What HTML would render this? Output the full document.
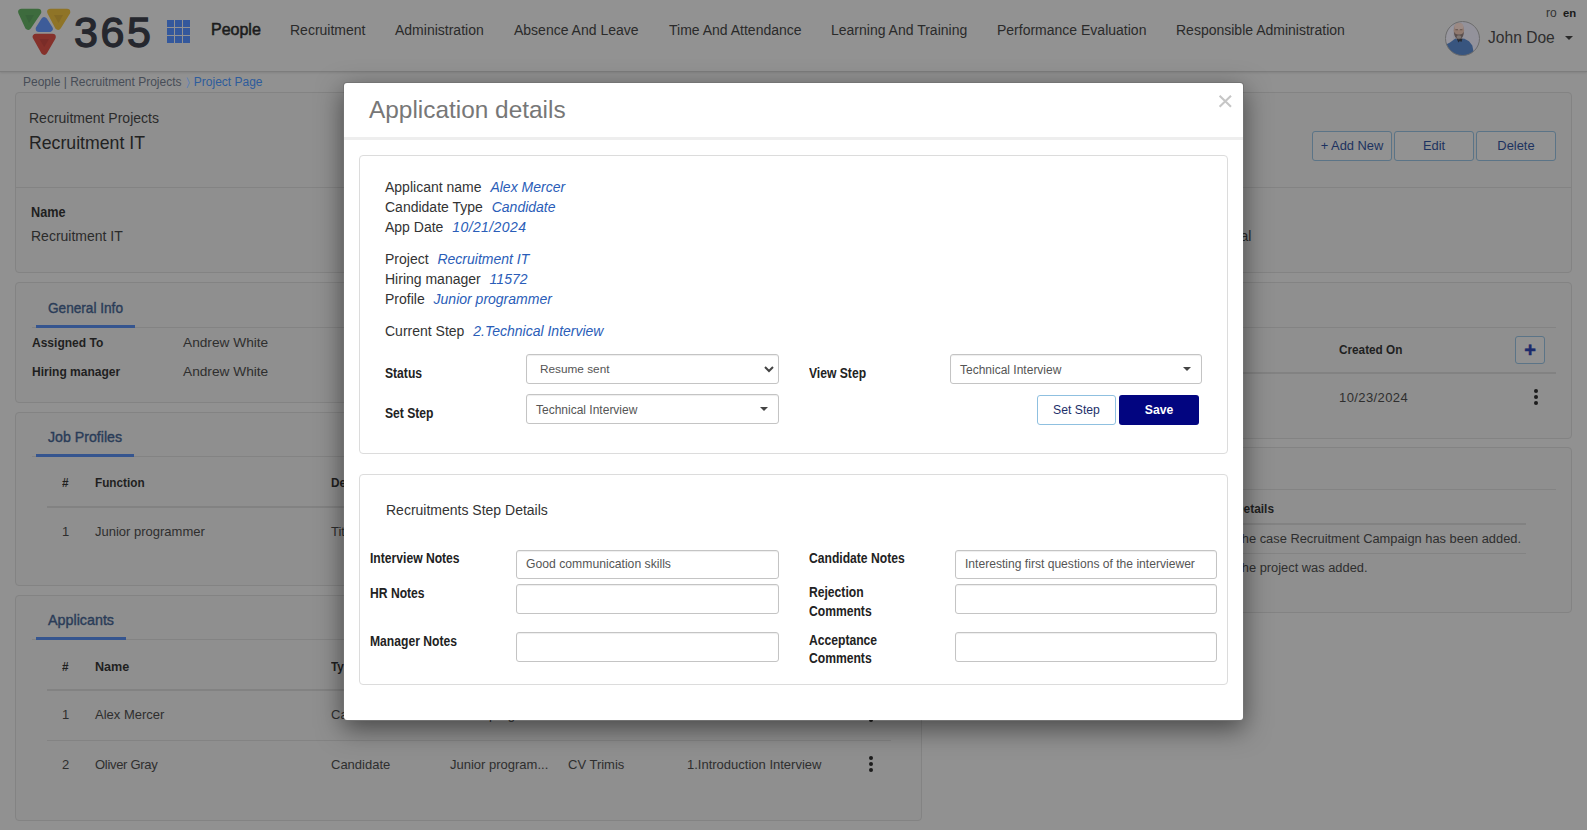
<!DOCTYPE html>
<html lang="en">
<head>
<meta charset="utf-8">
<title>Project Page</title>
<style>
*{box-sizing:border-box;margin:0;padding:0}
html,body{width:1587px;height:831px;overflow:hidden;background:#fff}
body{font-family:"Liberation Sans",sans-serif;font-size:14px;color:#222;position:relative}
#page{position:absolute;left:0;top:0;width:1587px;height:830px;background:#919191;overflow:hidden}
.t{position:absolute;white-space:nowrap;line-height:20px;height:20px;color:#262626}
.b{font-weight:bold}
.card{position:absolute;background:#8f8f8f;border:1px solid #838383;border-radius:4px}
.hl{position:absolute;height:1px;background:#838383}
#hdr{position:absolute;left:0;top:0;width:1587px;height:72px;background:#929292;border-bottom:1px solid #7d7d7d;box-shadow:0 1px 2px rgba(0,0,0,.1)}
.nav{font-size:14px;color:#2a2a2a;top:20px}
.btn{position:absolute;height:30px;border:1px solid #5b7487;border-radius:3px;background:#929292;color:#1d3260;font-size:12.9px;text-align:center;line-height:28px;white-space:nowrap}
.tab{color:#2a3c58;font-size:15px;-webkit-text-stroke:.4px #2a3c58;transform-origin:0 50%}
.tabu{position:absolute;height:3px;background:#35558f}
.kebab{position:absolute;width:4px}
.kebab i{display:block;width:4px;height:4px;border-radius:50%;background:#1c1c1c;margin-bottom:2px}
/* modal */
#mshadow{position:absolute;left:343px;top:82px;width:901px;height:639px;background:rgba(0,0,0,.2);border-radius:4px;box-shadow:0 8px 26px rgba(0,0,0,.5)}
#modal{position:absolute;left:344px;top:83px;width:899px;height:637px;background:#fff;border-radius:3px}
#mi{position:absolute;left:0;top:0;width:899px;height:637px}
.panel{position:absolute;border:1px solid #dcdcdc;border-radius:4px;background:#fff}
.v{color:#2a5db8;font-style:italic}
.inp{position:absolute;border:1px solid #c4c4c4;border-radius:3px;background:#fff;box-shadow:inset 0 1px 1px rgba(0,0,0,.07)}
.inp span{position:absolute;white-space:nowrap;color:#555;font-size:12px;line-height:16px}
.caret{position:absolute;width:0;height:0;border-left:4px solid transparent;border-right:4px solid transparent;border-top:4px solid #444}
.ml{font-size:14px;color:#333}
.lb{font-size:14px;color:#222;transform:scaleX(.866);transform-origin:0 50%}
.v{margin-left:5px}
.mbtn{position:absolute;height:30px;border-radius:3px;font-size:13px;text-align:center;line-height:28px;white-space:nowrap}
.bm{font-size:13px;font-weight:bold;color:#1f1f1f;transform:scaleX(.905);transform-origin:0 50%}
</style>
</head>
<body>
<div id="page">
  <div id="hdr">
    <svg style="position:absolute;left:14px;top:4px" width="60" height="56" viewBox="14 4 60 56">
      <g stroke-linejoin="round" stroke-width="6.6">
        <path d="M21.5 12 L38 12 L28.2 26.5 Z" fill="#3d6b3d" stroke="#3d6b3d"/>
        <path d="M50.5 12 L67 12 L58 26.5 Z" fill="#8f7427" stroke="#8f7427"/>
        <path d="M44.2 20.5 L49.5 28.7 L39 28.7 Z" fill="#3d5c99" stroke="#3d5c99"/>
        <path d="M36 37 L52.5 37 L44.1 51.5 Z" fill="#85312b" stroke="#85312b"/>
      </g>
      <path d="M25.5 15 L34 15 L29 23 Z" fill="#38633a"/>
      <path d="M54 15 L63 15 L58.5 23 Z" fill="#846a25"/>
      <path d="M39.5 39 L49 39 L44.2 47 Z" fill="#7a2c28"/>
    </svg>
    <div class="t" id="l365" style="left:74px;top:9px;font-size:43px;line-height:46px;height:46px;letter-spacing:2.6px;color:#25272e;-webkit-text-stroke:1.3px #25272e">365</div>
    <svg style="position:absolute;left:167px;top:20px" width="23" height="23" viewBox="0 0 23 23" fill="#34589c">
      <rect x="0" y="0" width="7" height="7"/><rect x="8" y="0" width="7" height="7"/><rect x="16" y="0" width="7" height="7"/>
      <rect x="0" y="8" width="7" height="7"/><rect x="8" y="8" width="7" height="7"/><rect x="16" y="8" width="7" height="7"/>
      <rect x="0" y="16" width="7" height="7"/><rect x="8" y="16" width="7" height="7"/><rect x="16" y="16" width="7" height="7"/>
    </svg>
    <div class="t" id="npeople" style="left:211px;top:20px;font-size:16px;color:#1c1c1c;-webkit-text-stroke:.55px #1c1c1c">People</div>
    <div class="t nav" style="left:290px">Recruitment</div>
    <div class="t nav" style="left:395px">Administration</div>
    <div class="t nav" style="left:514px">Absence And Leave</div>
    <div class="t nav" style="left:669px">Time And Attendance</div>
    <div class="t nav" style="left:831px">Learning And Training</div>
    <div class="t nav" style="left:997px">Performance Evaluation</div>
    <div class="t nav" style="left:1176px">Responsible Administration</div>
    <div class="t" style="left:1546px;top:3px;font-size:12px;color:#333">ro</div>
    <div class="t b" style="left:1563px;top:3px;font-size:11.3px;color:#1a1a1a">en</div>
    <svg style="position:absolute;left:1445px;top:20.5px" width="35" height="35" viewBox="0 0 35 35">
      <defs><clipPath id="avc"><circle cx="17.5" cy="17.5" r="17"/></clipPath></defs>
      <g clip-path="url(#avc)">
        <rect width="35" height="35" fill="#93929b"/>
        <rect x="0" y="0" width="8" height="35" fill="#98979f"/>
        <path d="M0 24 L5 21.5 L10.4 17.4 L14.5 19.6 L18.9 17.4 L24 20.3 L27.3 24.6 L28.6 31 L28 36 L0 36 Z" fill="#38557f"/>
        <path d="M11.6 17.6 L13.4 21.4 L14.8 20 L16.4 21 L17.7 17.6 Z" fill="#262b35"/>
        <ellipse cx="13.9" cy="9.4" rx="5.2" ry="7.6" fill="#917a70"/>
        <ellipse cx="13.9" cy="5.4" rx="4.4" ry="3.4" fill="#9c8a84"/>
        <path d="M8.9 10.5 Q9.2 17.9 13.9 18.6 Q18.6 17.9 18.9 10.5 Q17.5 14 13.9 13.4 Q10.3 14 8.9 10.5 Z" fill="#5a4e4d"/>
        <ellipse cx="13.9" cy="16" rx="2.4" ry="1.7" fill="#7f7672"/>
        <rect x="10.5" y="8.3" width="2.5" height=".9" fill="#5f4f49"/><rect x="14.8" y="8.3" width="2.5" height=".9" fill="#5f4f49"/>
      </g>
      <circle cx="17.5" cy="17.5" r="17" fill="none" stroke="#6c6c6c" stroke-width="1"/>
    </svg>
    <div class="t" id="jd" style="left:1488px;top:28px;font-size:15.6px;color:#2e2e2e">John Doe</div>
    <div class="caret" style="left:1565px;top:36px;border-top-color:#2a2a2a"></div>
  </div>

  <!-- breadcrumb -->
  <div class="t" id="bc" style="left:23px;top:72px;font-size:12px;color:#474d57">People | Recruitment Projects <span style="color:#5b7fb5;margin:0 .8px">&#x232A;</span> <span style="color:#2d5c9c">Project Page</span></div>

  <!-- top card -->
  <div class="card" style="left:15px;top:92px;width:1557px;height:181px"></div>
  <div class="hl" style="left:16px;top:187px;width:1555px"></div>
  <div class="t" id="rp1" style="left:29px;top:108px;font-size:14px;color:#2b2b2b">Recruitment Projects</div>
  <div class="t" id="rp2" style="left:29px;top:132px;font-size:17.7px;line-height:22px;height:22px;color:#222">Recruitment IT</div>
  <div class="btn" style="left:1312px;top:131px;width:80px">+ Add New</div>
  <div class="btn" style="left:1394px;top:131px;width:80px">Edit</div>
  <div class="btn" style="left:1476px;top:131px;width:80px">Delete</div>
  <div class="t bm" id="nm" style="left:31px;top:202px;font-size:14px">Name</div>
  <div class="t" id="rp3" style="left:31px;top:226px;font-size:14px;color:#2b2b2b">Recruitment IT</div>
  <div class="t" style="left:1240.5px;top:226px;font-size:14px;color:#2b2b2b">al</div>

  <!-- General Info -->
  <div class="card" style="left:15px;top:282px;width:907px;height:121px"></div>
  <div class="hl" style="left:32px;top:327px;width:875px"></div>
  <div class="t tab" id="tab1" style="left:48px;top:298px;transform:scaleX(.908)">General Info</div>
  <div class="tabu" style="left:36px;top:325px;width:99px"></div>
  <div class="t bm" id="at" style="left:32px;top:333px;transform:scaleX(.925)">Assigned To</div>
  <div class="t" id="aw1" style="left:183px;top:333px;font-size:13.7px;color:#2e2e2e">Andrew White</div>
  <div class="t bm" id="hm" style="left:32px;top:362px;transform:scaleX(.925)">Hiring manager</div>
  <div class="t" style="left:183px;top:362px;font-size:13.7px;color:#2e2e2e">Andrew White</div>

  <!-- Job Profiles -->
  <div class="card" style="left:15px;top:412px;width:907px;height:174px"></div>
  <div class="hl" style="left:32px;top:456px;width:875px"></div>
  <div class="t tab" id="tab2" style="left:48px;top:426.6px;transform:scaleX(.944)">Job Profiles</div>
  <div class="tabu" style="left:36px;top:454px;width:98px"></div>
  <div class="t bm" style="left:62px;top:473px;">#</div>
  <div class="t bm" id="fn" style="left:95px;top:473px;">Function</div>
  <div class="t bm" style="left:331px;top:473px;">De</div>
  <div class="hl" style="left:47px;top:506px;width:860px;height:2px;background:#828282"></div>
  <div class="t" style="left:62px;top:522px;font-size:13px;color:#2e2e2e">1</div>
  <div class="t" id="jp" style="left:95px;top:522px;font-size:13px;color:#2e2e2e">Junior programmer</div>
  <div class="t" style="left:331px;top:522px;font-size:13px;color:#2e2e2e">Tit</div>

  <!-- Applicants -->
  <div class="card" style="left:15px;top:595px;width:907px;height:226px"></div>
  <div class="hl" style="left:32px;top:639px;width:875px"></div>
  <div class="t tab" id="tab3" style="left:48px;top:609.6px;transform:scaleX(.954)">Applicants</div>
  <div class="tabu" style="left:36px;top:637px;width:90px"></div>
  <div class="t bm" style="left:62px;top:657px;">#</div>
  <div class="t bm" style="left:95px;top:657px;transform:scaleX(.97)">Name</div>
  <div class="t bm" style="left:331px;top:657px;">Ty</div>
  <div class="hl" style="left:47px;top:689px;width:844px;height:2px;background:#828282"></div>
  <div class="t" style="left:62px;top:705px;font-size:13px;color:#2e2e2e">1</div>
  <div class="t" id="am" style="left:95px;top:705px;font-size:13px;color:#2e2e2e">Alex Mercer</div>
  <div class="t" style="left:331px;top:705px;font-size:13px;color:#2e2e2e">Candidate</div>
  <div class="t" style="left:450px;top:705px;font-size:13px;color:#2e2e2e">Junior program...</div>
  <div class="kebab" style="left:869px;top:706px"><i></i><i></i><i></i></div>
  <div class="hl" style="left:47px;top:740px;width:844px"></div>
  <div class="t" style="left:62px;top:755px;font-size:13px;color:#2e2e2e">2</div>
  <div class="t" id="og" style="left:95px;top:755px;font-size:13px;letter-spacing:-.3px;color:#2e2e2e">Oliver Gray</div>
  <div class="t" id="cand" style="left:331px;top:755px;font-size:13px;color:#2e2e2e">Candidate</div>
  <div class="t" id="jpe" style="left:450px;top:755px;font-size:13px;color:#2e2e2e">Junior program...</div>
  <div class="t" id="cvt" style="left:568px;top:755px;font-size:13px;color:#2e2e2e">CV Trimis</div>
  <div class="t" id="ii" style="left:687px;top:755px;font-size:13px;color:#2e2e2e">1.Introduction Interview</div>
  <div class="kebab" style="left:869px;top:756px"><i></i><i></i><i></i></div>

  <!-- right col -->
  <div class="card" style="left:932px;top:282px;width:640px;height:157px"></div>
  <div class="hl" style="left:948px;top:327px;width:608px"></div>
  <div class="t bm" id="co" style="left:1339px;top:340px;">Created On</div>
  <div class="btn" style="left:1515px;top:336px;width:30px;height:28px;line-height:27px;font-weight:bold;font-size:20px;color:#1b2a6b;-webkit-text-stroke:.5px #1b2a6b">+</div>
  <div class="hl" style="left:948px;top:372px;width:608px;height:2px;background:#828282"></div>
  <div class="t" id="d23" style="left:1339px;top:388px;font-size:13px;letter-spacing:.4px;color:#2e2e2e">10/23/2024</div>
  <div class="kebab" style="left:1534px;top:389px"><i></i><i></i><i></i></div>

  <div class="card" style="left:932px;top:447px;width:640px;height:166px"></div>
  <div class="hl" style="left:948px;top:489px;width:608px"></div>
  <div class="t bm" id="det" style="left:1234.5px;top:499px;transform:scaleX(.915)">Details</div>
  <div class="hl" style="left:948px;top:523px;width:578px;height:2px;background:#828282"></div>
  <div class="t" id="tc" style="left:1234px;top:529px;font-size:12.85px;color:#2e2e2e">The case Recruitment Campaign has been added.</div>
  <div class="hl" style="left:948px;top:553px;width:578px"></div>
  <div class="t" id="tp" style="left:1234px;top:558px;font-size:12.85px;color:#2e2e2e">The project was added.</div>
</div>
<div id="mshadow"></div>
<div id="modal"><div id="mi">
  <div class="t" id="mtitle" style="left:25px;top:12px;font-size:24.4px;line-height:30px;height:30px;color:#777">Application details</div>
  <svg style="position:absolute;left:874px;top:11px" width="15" height="14" viewBox="0 0 15 14"><path d="M1.6 1.7 L13 12.7 M13 1.7 L1.6 12.7" stroke="#c6c6c6" stroke-width="2.1" fill="none"/></svg>
  <div style="position:absolute;left:0;top:54px;width:899px;height:3px;background:#eee"></div>

  <div class="panel" style="left:15px;top:72px;width:869px;height:299px"></div>
  <div class="t ml" style="left:41px;top:94px"><span class="k">Applicant name</span> <span class="v">Alex Mercer</span></div>
  <div class="t ml" style="left:41px;top:114px"><span class="k">Candidate Type</span> <span class="v">Candidate</span></div>
  <div class="t ml" style="left:41px;top:134px"><span class="k">App Date</span> <span class="v" style="letter-spacing:.4px">10/21/2024</span></div>
  <div class="t ml" style="left:41px;top:166px"><span class="k">Project</span> <span class="v">Recruitment IT</span></div>
  <div class="t ml" style="left:41px;top:186px"><span class="k">Hiring manager</span> <span class="v">11572</span></div>
  <div class="t ml" style="left:41px;top:206px"><span class="k">Profile</span> <span class="v">Junior programmer</span></div>
  <div class="t ml" style="left:41px;top:238px"><span class="k">Current Step</span> <span class="v">2.Technical Interview</span></div>

  <div class="t b lb" style="left:41px;top:280px">Status</div>
  <div class="inp" style="left:182px;top:271px;width:253px;height:30px"><span style="left:13px;top:6px;font-size:11.8px">Resume sent</span>
    <svg style="position:absolute;left:237px;top:11px" width="10" height="7" viewBox="0 0 10 7"><path d="M1 1 L5 5 L9 1" stroke="#444" stroke-width="2" fill="none"/></svg></div>
  <div class="t b lb" style="left:41px;top:320px">Set Step</div>
  <div class="inp" style="left:182px;top:311px;width:253px;height:30px"><span style="left:9px;top:7px">Technical Interview</span><div class="caret" style="left:233px;top:12px"></div></div>
  <div class="t b lb" style="left:465px;top:280px">View Step</div>
  <div class="inp" style="left:606px;top:271px;width:252px;height:30px"><span style="left:9px;top:7px">Technical Interview</span><div class="caret" style="left:232px;top:12px"></div></div>
  <div class="mbtn" style="left:693px;top:312px;width:79px;border:1px solid #8fc0e0;background:#fff;color:#1d2f6a;font-size:12.2px">Set Step</div>
  <div class="mbtn" style="left:775px;top:312px;width:80px;background:#020580;color:#fff;font-weight:bold;font-size:12.2px;line-height:30px">Save</div>

  <div class="panel" style="left:15px;top:391px;width:869px;height:211px"></div>
  <div class="t" id="rsd" style="left:42px;top:417px;font-size:14px;color:#333">Recruitments Step Details</div>
  <div class="t b lb" style="left:26px;top:465px">Interview Notes</div>
  <div class="inp" style="left:172px;top:467px;width:263px;height:29px"><span style="left:9px;top:5px;font-size:12.2px">Good communication skills</span></div>
  <div class="t b lb" style="left:26px;top:500px">HR Notes</div>
  <div class="inp" style="left:172px;top:501px;width:263px;height:30px"></div>
  <div class="t b lb" style="left:26px;top:548px">Manager Notes</div>
  <div class="inp" style="left:172px;top:549px;width:263px;height:30px"></div>
  <div class="t b lb" style="left:465px;top:465px">Candidate Notes</div>
  <div class="inp" style="left:611px;top:467px;width:262px;height:29px"><span style="left:9px;top:5px;font-size:12.1px">Interesting first questions of the interviewer</span></div>
  <div class="t b lb" style="left:465px;top:499px">Rejection</div>
  <div class="t b lb" style="left:465px;top:518px">Comments</div>
  <div class="inp" style="left:611px;top:501px;width:262px;height:30px"></div>
  <div class="t b lb" style="left:465px;top:547px">Acceptance</div>
  <div class="t b lb" style="left:465px;top:565px">Comments</div>
  <div class="inp" style="left:611px;top:549px;width:262px;height:30px"></div>
</div></div>
</body>
</html>
